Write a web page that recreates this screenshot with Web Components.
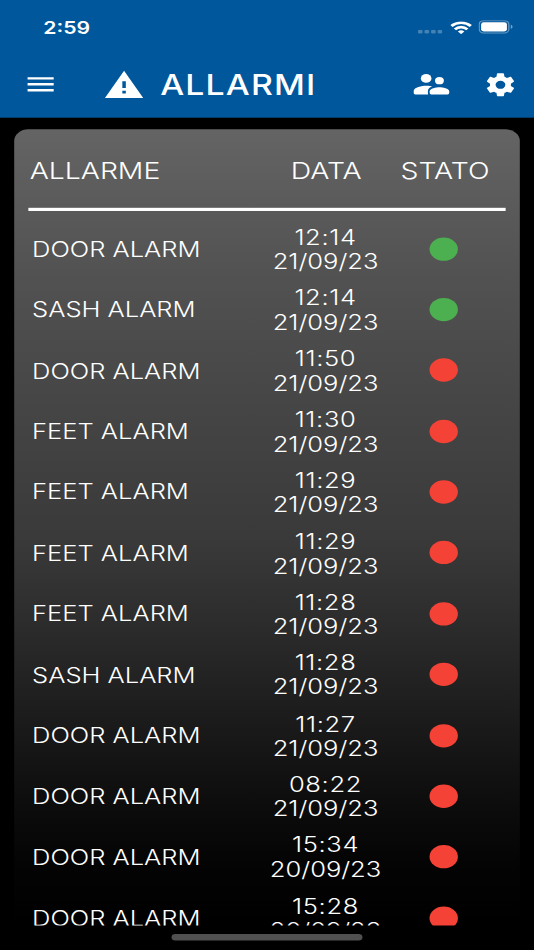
<!DOCTYPE html>
<html lang="it">
<head>
<meta charset="utf-8">
<title>Allarmi</title>
<style>
  html, body {
    margin: 0;
    height: 100%;
    overflow: hidden;
    background: #000;
  }
</style>
</head>
<body>
<app-screen>
  <status-bar slot="header" time="2:59"></status-bar>
  <nav-bar slot="header">ALLARMI</nav-bar>
  <alarm-table>
    <span slot="name">ALLARME</span>
    <span slot="date">DATA</span>
    <span slot="state">STATO</span>
  </alarm-table>
</app-screen>

<script>
const createTemplate = (innerHTML) => Object.assign(document.createElement('template'), { innerHTML });

class BaseElement extends HTMLElement {
  constructor() {
    super();
    this.attachShadow({ mode: 'open' });
    this.shadowRoot.appendChild(this.constructor.template.content.cloneNode(true));
  }
}

// 414x896 points, stretched to the window
class AppScreen extends BaseElement {
  static template = createTemplate(`
    <style>
      :host {
        display: flex;
        flex-direction: column;
        width: 414px;
        height: 896px;
        overflow: hidden;
        background: #000;
        color: #fff;
        font-family: Inter, "Liberation Sans", sans-serif;
        transform: scale(1.28986, 1.06027);
        transform-origin: 0 0;
      }

      header {
        flex: none;
        height: 110.6px;
        background: #00579c;
      }

      main {
        flex: none;
        height: 751.8px;
        padding: 11px 11.2px 0;
        overflow: hidden;
      }

      .indicator {
        flex: none;
        width: 147.7px;
        height: 5.6px;
        margin: 8px auto 0;
        border-radius: 3px;
        background: #505050;
      }
    </style>
    <header><slot name="header"></slot></header>
    <main><slot></slot></main>
    <div class="indicator"></div>
  `);
}

class StatusBar extends BaseElement {
  static template = createTemplate(`
    <style>
      :host {
        display: flex;
        align-items: center;
        height: 51.2px;
        padding: 0 15.6px 0 33.6px;
        box-sizing: border-box;
      }

      .time {
        flex: 1;
        padding-top: 1px;
        font-size: 16.4px;
        font-weight: 600;
      }

      svg {
        display: block;
      }

      .dots {
        margin: 9px 5.4px 0 0;
      }

      .wifi {
        margin-right: 5.6px;
      }
    </style>
    <span class="time"></span>
    <svg class="dots" width="19" height="4" viewBox="0 0 19 4" fill="#fff" fill-opacity="0.26">
      <rect width="3.6" height="3.6" rx="1.2"/>
      <rect x="5.1" width="3.6" height="3.6" rx="1.2"/>
      <rect x="10.2" width="3.6" height="3.6" rx="1.2"/>
      <rect x="15.3" width="3.6" height="3.6" rx="1.2"/>
    </svg>
    <svg class="wifi" width="17" height="12" viewBox="0 0 17 12" fill="none" stroke="#fff" stroke-width="2.4">
      <path d="M1 4.5a10.6 10.6 0 0 1 15 0"/>
      <path d="M3.7 7.6a6.7 6.7 0 0 1 9.6 0"/>
      <path d="M8.5 12.2 6 9.7a3.6 3.6 0 0 1 5 0z" fill="#fff" stroke="none"/>
    </svg>
    <svg width="27" height="13" viewBox="0 0 27 13">
      <rect x=".5" y=".5" width="23" height="11.6" rx="3.4" fill="none" stroke="#fff" stroke-opacity=".4"/>
      <rect x="2" y="2" width="20" height="8.6" rx="2" fill="#fff"/>
      <path d="M25 4.3c.8.4 1.4 1.1 1.4 2s-.6 1.7-1.4 2z" fill="#fff" fill-opacity=".45"/>
    </svg>
  `);

  connectedCallback() {
    this.shadowRoot.querySelector('.time').textContent = this.getAttribute('time');
  }
}

class NavBar extends BaseElement {
  static template = createTemplate(`
    <style>
      :host {
        display: flex;
        align-items: center;
        height: 57.4px;
        padding: 0 13.2px 0 17.9px;
      }

      svg {
        flex: none;
        display: block;
        fill: #fff;
      }

      .warning {
        margin-left: 34.9px;
      }

      .title {
        flex: 1;
        margin-left: 12px;
        padding-top: 1px;
        font-size: 26.2px;
        font-weight: 500;
        letter-spacing: 0.9px;
      }

      .settings {
        margin-left: 23.4px;
      }
    </style>
    <svg width="27" height="27" viewBox="0 0 24 24"><path d="M3 18h18v-2H3v2zm0-5h18v-2H3v2zm0-7v2h18V6H3z"/></svg>
    <svg class="warning" width="32.4" height="32.4" viewBox="0 0 24 24"><path d="M1 21h22L12 2 1 21zm12-3h-2v-2h2v2zm0-4h-2V9.4h2V14z"/></svg>
    <span class="title"><slot></slot></span>
    <svg width="33" height="33" viewBox="0 0 24 24">
      <circle cx="9" cy="8" r="3"/>
      <circle cx="16.5" cy="9.5" r="2.5"/>
      <path d="M9 13c-2.33 0-7 1.17-7 3.5V18c0 .6.4 1 1 1h7.2c-.13-.3-.2-.6-.2-1v-1.25c0-.85.33-2.34 2.37-3.47C10.5 13.1 9.66 13 9 13z"/>
      <path d="M16.5 14c-1.83 0-5.5.92-5.5 2.75V18c0 .6.4 1 1 1h9c.6 0 1-.4 1-1v-1.25c0-1.83-3.67-2.75-5.5-2.75z"/>
    </svg>
    <svg class="settings" width="26" height="26" viewBox="0 0 24 24"><path d="M12 15.5A3.5 3.5 0 0 1 8.5 12 3.5 3.5 0 0 1 12 8.5a3.5 3.5 0 0 1 3.5 3.5 3.5 3.5 0 0 1-3.5 3.5m7.43-2.53c.04-.32.07-.64.07-.97s-.03-.66-.07-1l2.11-1.63c.19-.15.24-.42.12-.64l-2-3.46c-.12-.22-.39-.31-.61-.22l-2.49 1c-.52-.39-1.06-.73-1.69-.98l-.37-2.65A.506.506 0 0 0 14 2h-4c-.25 0-.46.18-.5.42l-.37 2.65c-.63.25-1.17.59-1.69.98l-2.49-1c-.22-.09-.49 0-.61.22l-2 3.46c-.13.22-.07.49.12.64L4.57 11c-.04.34-.07.67-.07 1s.03.65.07.97l-2.11 1.66c-.19.15-.25.42-.12.64l2 3.46c.12.22.39.3.61.22l2.49-1.01c.52.4 1.06.74 1.69.99l.37 2.65c.04.24.25.42.5.42h4c.25 0 .46-.18.5-.42l.37-2.65c.63-.26 1.17-.59 1.69-.99l2.49 1.01c.22.08.49 0 .61-.22l2-3.46c.12-.22.07-.49-.12-.64l-2.11-1.66z"/></svg>
  `);
}

class AlarmRow extends BaseElement {
  static template = createTemplate(`
    <style>
      :host {
        display: grid;
        grid-template-columns: 189px 81px 1fr;
        align-items: center;
        height: 57.37px;
        font-size: 19.8px;
        line-height: 23.1px;
      }

      .name {
        padding: 1.8px 0 0 2.5px;
        white-space: nowrap;
      }

      .date {
        justify-self: center;
        display: flex;
        flex-direction: column;
        align-items: center;
        padding: 2.4px 0 0 1px;
      }

      .hour {
        letter-spacing: 0.5px;
      }

      .state {
        justify-self: center;
        width: 22px;
        height: 22px;
        margin-left: 4px;
        border-radius: 50%;
        background: #f44336;
      }

      :host([resolved]) .state {
        background: #4caf50;
      }
    </style>
    <span class="name"></span>
    <div class="date"><span class="hour"></span><span class="day"></span></div>
    <div class="state"></div>
  `);

  connectedCallback() {
    for (const field of ['name', 'hour', 'day']) {
      this.shadowRoot.querySelector(`.${field}`).textContent = this.getAttribute(field);
    }
  }
}

const alarms = [
  ['DOOR ALARM', '12:14', '21/09/23', true],
  ['SASH ALARM', '12:14', '21/09/23', true],
  ['DOOR ALARM', '11:50', '21/09/23'],
  ['FEET ALARM', '11:30', '21/09/23'],
  ['FEET ALARM', '11:29', '21/09/23'],
  ['FEET ALARM', '11:29', '21/09/23'],
  ['FEET ALARM', '11:28', '21/09/23'],
  ['SASH ALARM', '11:28', '21/09/23'],
  ['DOOR ALARM', '11:27', '21/09/23'],
  ['DOOR ALARM', '08:22', '21/09/23'],
  ['DOOR ALARM', '15:34', '20/09/23'],
  ['DOOR ALARM', '15:28', '20/09/23'],
];

class AlarmTable extends BaseElement {
  static template = createTemplate(`
    <style>
      :host {
        display: block;
        height: 752px;
        padding: 0 11.2px;
        box-sizing: border-box;
        border-radius: 11px;
        background: linear-gradient(#646464, #525252 18%, #434343 38%, #393939 52%, #2c2c2c 62%, #1e1e1e 72%, #0c0c0c 85%, #040404 92%, #000);
        font-weight: 350;
      }

      .head {
        display: grid;
        grid-template-columns: 189px 81px 1fr;
        align-items: center;
        height: 74.2px;
        padding-top: 4.6px;
        box-sizing: border-box;
        font-size: 22px;
        line-height: 26px;
      }

      .name {
        padding-left: 0.6px;
      }

      .date {
        justify-self: center;
        padding-left: 2px;
      }

      .state {
        justify-self: center;
        padding-left: 6px;
      }

      .divider {
        height: 3px;
        margin-bottom: 7.2px;
        background: #fff;
      }
    </style>
    <div class="head">
      <div class="name"><slot name="name"></slot></div>
      <div class="date"><slot name="date"></slot></div>
      <div class="state"><slot name="state"></slot></div>
    </div>
    <div class="divider"></div>
    <div class="rows"></div>
  `);

  connectedCallback() {
    const rows = this.shadowRoot.querySelector('.rows');

    for (const [name, hour, day, resolved] of alarms) {
      const row = document.createElement('alarm-row');
      row.setAttribute('name', name);
      row.setAttribute('hour', hour);
      row.setAttribute('day', day);
      row.toggleAttribute('resolved', Boolean(resolved));
      rows.appendChild(row);
    }
  }
}

window.customElements.define('app-screen', AppScreen);
window.customElements.define('status-bar', StatusBar);
window.customElements.define('nav-bar', NavBar);
window.customElements.define('alarm-row', AlarmRow);
window.customElements.define('alarm-table', AlarmTable);
</script>
</body>
</html>
